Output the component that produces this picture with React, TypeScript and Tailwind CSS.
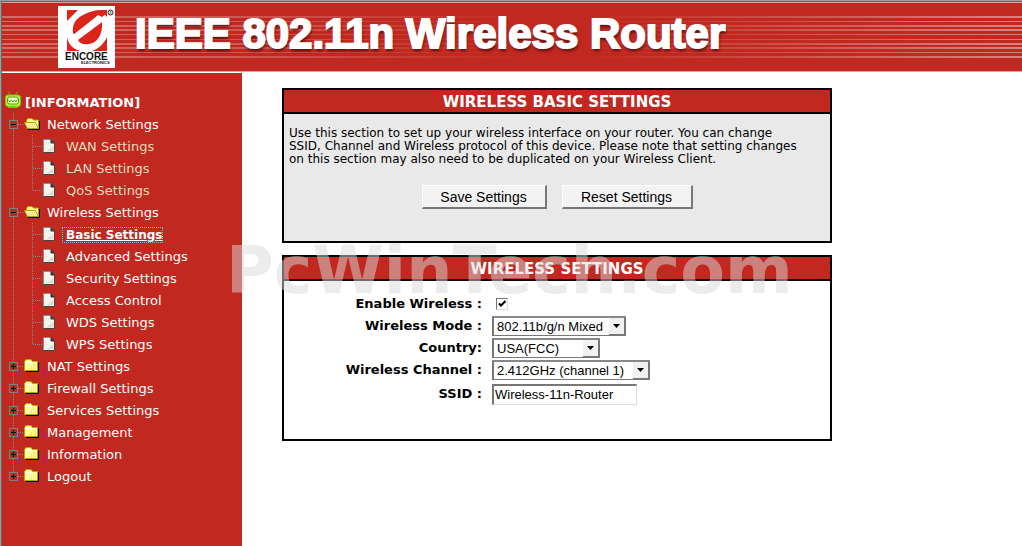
import { ReactNode } from "react";

type Branch = {
  label: string;
  children?: string[];
  muted?: boolean;
};

const MENU: Branch[] = [
  {
    label: "Network Settings",
    muted: true,
    children: ["WAN Settings", "LAN Settings", "QoS Settings"],
  },
  {
    label: "Wireless Settings",
    children: [
      "Basic Settings",
      "Advanced Settings",
      "Security Settings",
      "Access Control",
      "WDS Settings",
      "WPS Settings",
    ],
  },
  { label: "NAT Settings" },
  { label: "Firewall Settings" },
  { label: "Services Settings" },
  { label: "Management" },
  { label: "Information" },
  { label: "Logout" },
];

const ACTIVE = "Basic Settings";

// [top, height] of each pinstripe in the banner
const STRIPES = [
  [13, 2],
  [18, 1],
  [22, 2],
  [26, 2],
  [31, 1],
  [36, 1],
  [40, 2],
  [44, 2],
  [49, 1],
  [53, 2],
];

function BannerStripes() {
  return (
    <svg className="absolute inset-0 h-full w-full" aria-hidden="true">
      <defs>
        <linearGradient id="stripe" x1="0" x2="1" y1="0" y2="0">
          <stop offset="0" stopColor="#fff" stopOpacity="0.32" />
          <stop offset="0.25" stopColor="#fff" stopOpacity="0.22" />
          <stop offset="0.52" stopColor="#fff" stopOpacity="0" />
          <stop offset="0.57" stopColor="#fff" stopOpacity="0" />
          <stop offset="0.75" stopColor="#fff" stopOpacity="0.18" />
          <stop offset="1" stopColor="#fff" stopOpacity="0.42" />
        </linearGradient>
      </defs>
      {STRIPES.map(([y, h]) => (
        <rect key={y} x="0" y={y} width="100%" height={h} fill="url(#stripe)" />
      ))}
    </svg>
  );
}

function EncoreLogo() {
  return (
    <svg width="57" height="62" viewBox="0 0 57 62" role="img" aria-label="Encore Electronics">
      <rect width="57" height="62" fill="#fff" />
      <rect x="9" y="4" width="40" height="41" fill="#dd241b" />
      {/* round white band of the E */}
      <path d="M20 4H42L49 11V31C46 38 40 43 34 45H22C15 43 10 38 9 31V15Z" fill="#fff" />
      <path d="M15 27C14 19 17 13 25 9 30 6 37 4 43 4L49 4V7L44 11 40 9 18 31Z" fill="#dd241b" />
      <path d="M16 26 34 8 38 12 19 31Z" fill="#dd241b" />
      <path d="M15 29 39 10 43 14 19 34Z" fill="#fff" />
      <path d="M20 34 44 16C45 27 40 37 31 38 25 39 21 37 20 34Z" fill="#dd241b" />
      <path d="M9 4H19L9 13Z" fill="#dd241b" />
      <circle cx="52.5" cy="6.5" r="2.5" fill="none" stroke="#222" />
      <path d="M52 8V5.500H53V8" stroke="#222" strokeWidth="0.500" fill="none" />
      <text x="7" y="54" fontSize="10" fontWeight="bold" fontFamily="Liberation Sans, sans-serif" fill="#111">
        ENCORE
      </text>
      <text x="23" y="58" fontSize="4" fontWeight="bold" fontFamily="Liberation Sans, sans-serif" fill="#111">
        ELECTRONICS
      </text>
    </svg>
  );
}

function TvIcon() {
  return (
    <svg width="16" height="17" viewBox="0 0 16 17" aria-hidden="true">
      <path d="M3 0.500 6 4M13 0.500 10 4" stroke="#6fae12" fill="none" />
      <rect x="0.500" y="4" width="15" height="11.500" rx="2.500" fill="#b6f23c" stroke="#79c40e" />
      <rect x="2.500" y="6" width="11" height="7" rx="2" fill="#eaffc9" stroke="#5aa30c" />
      <path d="M3.500 9 5 11 6.500 9 8 11 9.500 9 11 11 12.500 8.500" stroke="#5aa30c" fill="none" />
      <path d="M3 16.500h10" stroke="#79c40e" />
    </svg>
  );
}

function ToggleGlyph({ open, last }: { open: boolean; last: boolean }) {
  return (
    <svg width="16" height="22" viewBox="0 0 16 22" shapeRendering="crispEdges" aria-hidden="true">
      <path d={last ? "M5.500 0V11" : "M5.500 0V22"} stroke="#8c8c88" strokeDasharray="1 1" />
      <path d="M10 11.500H16" stroke="#8c8c88" strokeDasharray="1 1" />
      <rect x="1.500" y="7.500" width="8" height="8" fill="#c12820" stroke="#808080" />
      <path d={open ? "M3 11.500H8" : "M3 11.500H8M5.500 9V14"} stroke="#000" />
    </svg>
  );
}

function LeafLines({ last }: { last: boolean }) {
  return (
    <svg width="35" height="22" viewBox="0 0 35 22" shapeRendering="crispEdges" aria-hidden="true">
      <path
        d={last ? "M5.500 0V22M24.500 0V11M25 11.500H35" : "M5.500 0V22M24.500 0V22M25 11.500H35"}
        stroke="#8c8c88"
        strokeDasharray="1 1"
      />
    </svg>
  );
}

function FolderIcon({ open }: { open: boolean }) {
  if (open) {
    return (
      <svg width="17" height="14" viewBox="0 0 17 14" aria-hidden="true">
        <path d="M4 12.500H15.500V4" fill="none" stroke="#000" />
        <path d="M2.500 6V3L4 1.500H8L9.500 3H14.500V11.500" fill="#fdf58a" stroke="#b3a400" />
        <path d="M0.500 5.500H11.500L14.500 11.500H3.500Z" fill="#fff3a0" stroke="#b3a400" />
        <path d="M5 10h7M4 8h7" stroke="#eec878" strokeDasharray="1 1" />
      </svg>
    );
  }
  return (
    <svg width="17" height="14" viewBox="0 0 17 14" aria-hidden="true">
      <path d="M2 12.500H14.500V3.500" fill="none" stroke="#000" />
      <path d="M0.500 11.500V2.500L2 0.500H7L8.500 2.500H13.500V11.500Z" fill="#ffff9c" stroke="#b3a400" />
      <path d="M1.500 3.500H8" stroke="#fff" />
      <path d="M5 10h8M7 8h6M9 6h4" stroke="#f0c880" strokeDasharray="1 1" />
    </svg>
  );
}

function PageIcon() {
  return (
    <svg width="12" height="14" viewBox="0 0 12 14" aria-hidden="true">
      <path d="M0.500 0.500H8L11.500 4V13.500H0.500Z" fill="#f4f4ee" stroke="#8a8a8a" />
      <path d="M11.500 4V13.500H0.500" fill="none" stroke="#444" />
      <path d="M8 0.500V4H11.500Z" fill="#333" stroke="#333" />
      <path d="M3 12.500H10.500V7Z" fill="#dcdcd2" />
    </svg>
  );
}

function Sidebar() {
  return (
    <nav className="w-60 shrink-0 bg-[#c12820] pt-[18px] text-[13px] text-white">
      <a href="#info" className="flex h-[22px] items-start pl-[3px] font-bold">
        <TvIcon />
        <span className="pt-px pl-1 leading-[22px]">[INFORMATION]</span>
      </a>
      <ul className="pl-1.5">
        {MENU.map((branch, i) => (
          <li key={branch.label}>
            <a href="#branch" className="flex h-[22px] items-center">
              <ToggleGlyph open={!!branch.children} last={i === MENU.length - 1} />
              <FolderIcon open={!!branch.children} />
              <span className="pt-0.5 pl-1.5">{branch.label}</span>
            </a>
            {branch.children && (
              <ul className={branch.muted ? "text-[#e0dcbc]" : ""}>
                {branch.children.map((leaf, j) => (
                  <li key={leaf}>
                    <a href="#leaf" className="flex h-[22px] items-center">
                      <LeafLines last={j === branch.children!.length - 1} />
                      <PageIcon />
                      {leaf === ACTIVE ? (
                        <span className="mt-0.5 ml-[7px] border border-dotted border-[#3ed7df] pl-[3px] text-[12px] leading-[14px] font-bold underline">
                          {leaf}
                        </span>
                      ) : (
                        <span className="pt-0.5 pl-[11px]">{leaf}</span>
                      )}
                    </a>
                  </li>
                ))}
              </ul>
            )}
          </li>
        ))}
      </ul>
    </nav>
  );
}

function Panel({ title, className, children }: { title: string; className: string; children: ReactNode }) {
  return (
    <section className="border-2 border-black">
      <h2 className="border-b-2 border-black bg-[#c12820] pt-0.5 text-center text-[15px] leading-5 font-bold text-white">
        {title}
      </h2>
      <div className={className}>{children}</div>
    </section>
  );
}

function PushButton({ className, children }: { className: string; children: ReactNode }) {
  return (
    <button
      type="button"
      className={`h-6 border-t border-r-2 border-b-2 border-l border-t-white border-r-[#777] border-b-[#777] border-l-white bg-[#f3f3f3] font-['Liberation_Sans',sans-serif] text-[14px] leading-5 ${className}`}
    >
      {children}
    </button>
  );
}

function Field({ id, label, children }: { id: string; label: string; children: ReactNode }) {
  return (
    <div className="flex min-h-[22px] items-center">
      <label htmlFor={id} className="w-[198px] shrink-0 text-right leading-5 font-bold">
        {label}
      </label>
      <div className="pl-2.5">{children}</div>
    </div>
  );
}

function SelectBox({ id, value, className }: { id: string; value: string; className: string }) {
  return (
    <div
      className={`relative border border-t-2 border-l-2 border-t-[#888] border-r-[#777] border-b-[#777] border-l-[#777] ${className}`}
    >
      <select
        id={id}
        className="block h-[17px] w-full appearance-none bg-white pl-[3px] font-['Liberation_Sans',sans-serif] text-[13px] leading-[17px]"
      >
        <option>{value}</option>
      </select>
      <span className="pointer-events-none absolute inset-y-0 right-0 flex w-4 items-center justify-center border-r border-b border-[#777] bg-[#f1f1f1]">
        <svg width="7" height="4" viewBox="0 0 7 4" aria-hidden="true">
          <path d="M0 0H7L3.500 4Z" />
        </svg>
      </span>
    </div>
  );
}

export default function App() {
  return (
    <div className="border-t border-l border-[#9c9c9c] font-['DejaVu_Sans',Verdana,sans-serif] text-[13px] text-black">
      <div className="flex min-h-[calc(100vh-1px)] flex-col border-t border-l border-[#666] bg-white">
        <header className="relative flex h-[70px] items-start border-y border-[#e8a09c] bg-[#c12820] pt-[3px] pl-14">
          <BannerStripes />
          <div className="relative">
            <EncoreLogo />
          </div>
          <h1 className="relative pt-1 pl-5 font-['Liberation_Sans',Arial,sans-serif] text-[42px] leading-[48px] font-bold whitespace-nowrap text-white [-webkit-text-stroke:2px_white] [text-shadow:1px_3px_3px_rgba(60,10,10,0.8)]">
            IEEE 802.11n Wireless Router
          </h1>
        </header>

        <div className="mt-px flex grow">
          <Sidebar />
          <main className="relative min-w-0 grow pt-[15px] pl-10">
            <div className="flex max-w-[550px] flex-col gap-3">
              <Panel title="WIRELESS BASIC SETTINGS" className="bg-[#e9e9e9] px-[5px] pt-[13px] pb-8">
                <p className="text-[12px] leading-[13px]">
                  Use this section to set up your wireless interface on your router. You can change
                  <br />
                  SSID, Channel and Wireless protocol of this device. Please note that setting changes
                  <br />
                  on this section may also need to be duplicated on your Wireless Client.
                </p>
                <div className="mt-[19px] flex justify-center gap-[15px]">
                  <PushButton className="w-[125px]">Save Settings</PushButton>
                  <PushButton className="w-[131px]">Reset Settings</PushButton>
                </div>
              </Panel>

              <Panel title="WIRELESS SETTINGS" className="pt-3 pb-[34px]">
                <form>
                  <Field id="enable" label="Enable Wireless :">
                    <div className="relative ml-1 size-3">
                      <input
                        id="enable"
                        type="checkbox"
                        defaultChecked
                        className="peer block size-3 appearance-none border border-t-[#777] border-r-[#ddd] border-b-[#ddd] border-l-[#777] bg-white"
                      />
                      <svg
                        className="pointer-events-none absolute inset-0 hidden peer-checked:block"
                        width="12"
                        height="12"
                        viewBox="0 0 12 12"
                        aria-hidden="true"
                      >
                        <path d="M3 5.500 5 7.500 9.500 3" fill="none" stroke="#000" strokeWidth="2" />
                      </svg>
                    </div>
                  </Field>
                  <Field id="mode" label="Wireless Mode :">
                    <SelectBox id="mode" value="802.11b/g/n Mixed" className="w-[134px]" />
                  </Field>
                  <Field id="country" label="Country:">
                    <SelectBox id="country" value="USA(FCC)" className="w-[108px]" />
                  </Field>
                  <Field id="channel" label="Wireless Channel :">
                    <SelectBox id="channel" value="2.412GHz (channel 1)" className="w-[158px]" />
                  </Field>
                  <div className="pt-0.5">
                    <Field id="ssid" label="SSID :">
                      <input
                        id="ssid"
                        type="text"
                        defaultValue="Wireless-11n-Router"
                        className="block h-[21px] w-[145px] border border-t-2 border-l-2 border-t-[#777] border-r-[#ddd] border-b-[#ddd] border-l-[#777] bg-white pl-px font-['Liberation_Sans',sans-serif] text-[13px]"
                      />
                    </Field>
                  </div>
                </form>
              </Panel>
            </div>
            <div className="pointer-events-none absolute top-[160px] -left-[16px] text-[65px] leading-[75px] font-bold text-[#d9d9d9]/50 select-none">
              PcWinTech.com
            </div>
          </main>
        </div>
      </div>
    </div>
  );
}
